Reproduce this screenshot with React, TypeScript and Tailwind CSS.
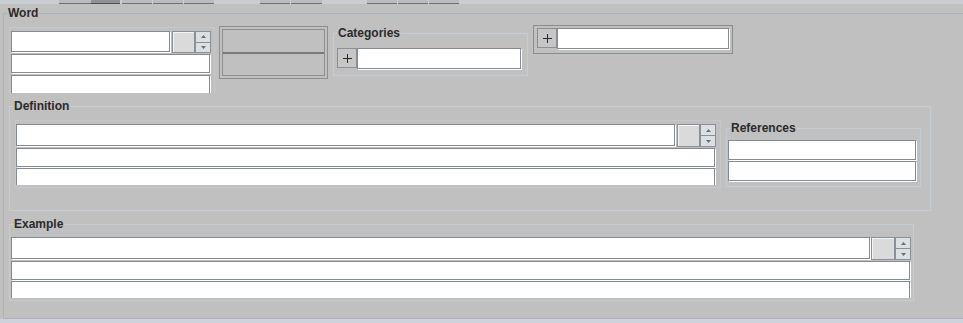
import React from "react";

function Field({ cls }: { cls: string }) {
  return <div className={"shrink-0 bg-white border border-[#858b93] shadow-[1px_1px_0_0_#ffffff] " + cls} />;
}

function Arrow({ up }: { up: boolean }) {
  return (
    <svg width="5" height="3" viewBox="0 0 5 3">
      {up ? <path d="M2.5 0 L5 3 L0 3 Z" fill="#6b6f74" /> : <path d="M0 0 L5 0 L2.5 3 Z" fill="#6b6f74" />}
    </svg>
  );
}

function Spinner({ cls }: { cls: string }) {
  return (
    <div className={"shrink-0 flex flex-col w-[16px] " + cls}>
      <div className="flex-1 bg-[#dde0e3] border border-[#8a9097] flex items-center justify-center">
        <Arrow up />
      </div>
      <div className="flex-1 bg-[#dde0e3] border border-t-0 border-[#8a9097] flex items-center justify-center">
        <Arrow up={false} />
      </div>
    </div>
  );
}

function SqButton({ cls }: { cls: string }) {
  return (
    <div className={"shrink-0 bg-[#dadada] border border-[#8a9097] shadow-[inset_1px_1px_0_0_#f4f4f4] " + cls} />
  );
}

function Plus() {
  return (
    <div className="shrink-0 w-[20px] h-[20px] bg-[#c6c6c6] border border-[#8c9096] flex items-center justify-center">
      <svg width="9" height="9" viewBox="0 0 9 9">
        <rect x="4" y="0" width="1" height="9" fill="#2a2a2a" />
        <rect x="0" y="4" width="9" height="1" fill="#2a2a2a" />
      </svg>
    </div>
  );
}

const legendCls = "ml-[3px] px-[1px] text-[12px] leading-[14px] font-bold text-[#2b2b2b]";

export default function App() {
  return (
    <div className="w-[963px] h-[323px] overflow-hidden bg-[#c0c0c0] font-['Liberation_Sans',Arial,sans-serif]">
      {/* top tab strip */}
      <div className="flex h-[4px] bg-[#c9ced5]">
        <div className="w-[59px]" />
        <div className="w-[32px] bg-[#b9bdc1] border-b border-[#707070]" />
        <div className="w-[29px] bg-[#8f929a] border-b border-[#505050]" />
        <div className="w-[30px] ml-[2px] bg-[#b9bdc1] border-b border-[#707070]" />
        <div className="w-[30px] ml-[1px] bg-[#b9bdc1] border-b border-[#707070]" />
        <div className="w-[30px] ml-[1px] bg-[#b9bdc1] border-b border-[#707070]" />
        <div className="w-[46px]" />
        <div className="w-[30px] bg-[#b9bdc1] border-b border-[#707070]" />
        <div className="w-[31px] ml-[1px] bg-[#b9bdc1] border-b border-[#707070]" />
        <div className="w-[45px]" />
        <div className="w-[30px] bg-[#b9bdc1] border-b border-[#707070]" />
        <div className="w-[30px] ml-[1px] bg-[#b9bdc1] border-b border-[#707070]" />
        <div className="w-[30px] ml-[1px] bg-[#b9bdc1] border-b border-[#707070]" />
      </div>
      <div className="h-[2px]" />

      {/* outer Word fieldset */}
      <fieldset className="ml-[3px] w-[1000px] h-[313px] min-w-0 p-0 m-0 border border-r-0 border-[#aab2bb]">
        <legend className={"ml-[3px] px-[1px] text-[12px] leading-[14px] font-bold text-[#2b2b2b]"}>Word</legend>

        {/* row 1 */}
        <div className="flex items-start mt-[5px] pl-[5px]">
          {/* word sub panel */}
          <div className="mt-[2px] w-[206px] h-[66px] border border-b-0 border-[#c5c9ce] overflow-hidden pl-[1px] pt-[3px]">
            <div className="flex h-[22px]">
              <Field cls="w-[159px] h-[21px]" />
              <SqButton cls="ml-[2px] w-[23px] h-[22px]" />
              <Spinner cls="h-[22px]" />
            </div>
            <Field cls="mt-[1px] w-[199px] h-[19px]" />
            <Field cls="mt-[2px] w-[199px] h-[20px]" />
          </div>

          {/* middle box */}
          <div className="ml-[4px] mt-[1px] w-[109px] h-[53px] border border-[#8e8e8e] p-[2px] shrink-0">
            <div className="h-full flex flex-col border border-[#8e8e8e]">
              <div className="flex-1" />
              <div className="h-[2px] bg-[#7b7b7b]" />
              <div className="flex-1" />
            </div>
          </div>

          {/* Categories */}
          <fieldset className="ml-[5px] mt-[1px] w-[195px] h-[50px] min-w-0 p-0 m-0 border border-[#c4ccd6] shrink-0">
            <legend className={legendCls}>Categories</legend>
            <div className="flex items-start mt-[8px] pl-[3px]">
              <Plus />
              <Field cls="w-[164px] h-[21px]" />
            </div>
          </fieldset>

          {/* right box */}
          <div className="ml-[5px] w-[200px] h-[29px] border border-[#8c8c8c] pl-[3px] pt-[2px] flex items-start shrink-0">
            <Plus />
            <Field cls="w-[172px] h-[21px]" />
          </div>
        </div>

        {/* Definition */}
        <fieldset className="ml-[5px] mt-[6px] w-[922px] h-[112px] min-w-0 p-0 border border-[#c4ccd6]">
          <legend className={legendCls}>Definition</legend>
          <div className="flex items-start">
            <div className="ml-[5px] mt-[7px] w-[706px] h-[68px] border border-[#c4c8cd] pt-[3px] shrink-0">
              <div className="h-[61px] overflow-hidden">
                <div className="flex h-[23px]">
                  <Field cls="w-[659px] h-[22px]" />
                  <SqButton cls="ml-[2px] w-[23px] h-[23px]" />
                  <Spinner cls="h-[23px]" />
                </div>
                <Field cls="mt-[1px] w-[699px] h-[19px]" />
                <Field cls="mt-[1px] w-[699px] h-[20px]" />
              </div>
            </div>

            {/* References */}
            <fieldset className="ml-[5px] mt-[8px] w-[195px] h-[66px] min-w-0 p-0 border border-[#c4ccd6] shrink-0">
              <legend className={legendCls}>References</legend>
              <div className="pt-[5px] pl-[1px]">
                <Field cls="w-[188px] h-[20px]" />
                <Field cls="mt-[1px] w-[188px] h-[20px]" />
              </div>
            </fieldset>
          </div>
        </fieldset>

        {/* Example */}
        <fieldset className="ml-[5px] mt-[6px] w-[905px] h-[84px] min-w-0 p-0 border border-[#c4ccd6]">
          <legend className={legendCls}>Example</legend>
          <div className="pl-[1px] pt-[6px]">
            <div className="h-[61px] overflow-hidden">
              <div className="flex h-[23px]">
                <Field cls="w-[859px] h-[22px]" />
                <SqButton cls="ml-[1px] w-[24px] h-[23px]" />
                <Spinner cls="h-[23px]" />
              </div>
              <Field cls="mt-[1px] w-[899px] h-[19px]" />
              <Field cls="mt-[1px] w-[899px] h-[20px]" />
            </div>
          </div>
        </fieldset>
      </fieldset>
      <div className="h-[4px] bg-[#cdd3da]" />
    </div>
  );
}
